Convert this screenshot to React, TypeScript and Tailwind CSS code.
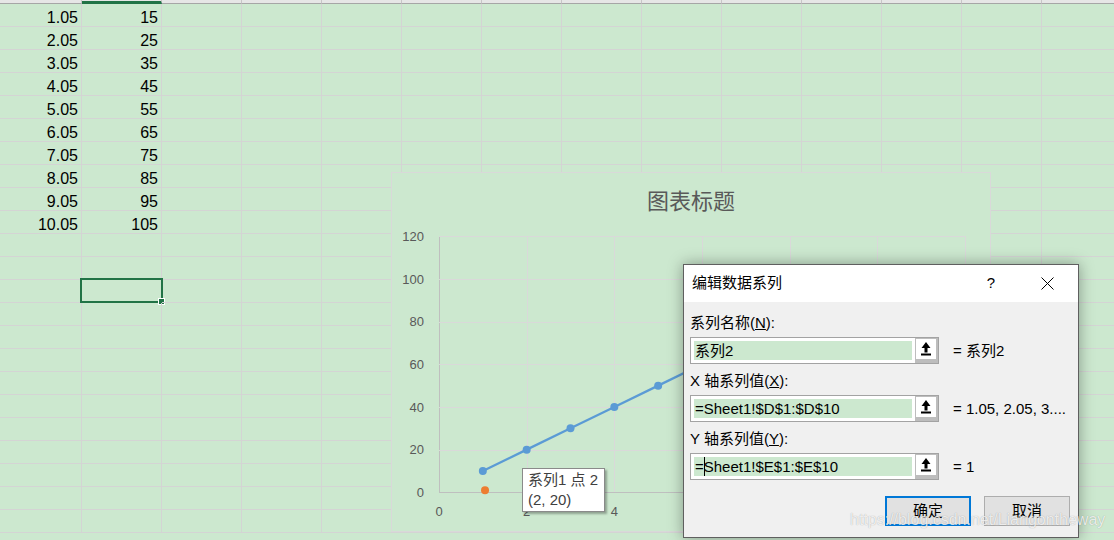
import React from 'react';

const COLS = Array.from({ length: 14 }, (_, i) => i);
const ROWS = Array.from({ length: 23 }, (_, i) => i);
const COL_A = ['1.05', '2.05', '3.05', '4.05', '5.05', '6.05', '7.05', '8.05', '9.05', '10.05'];
const COL_B = ['15', '25', '35', '45', '55', '65', '75', '85', '95', '105'];

// chart geometry (px, relative to chart box)
const PLOT_L = 48;
const PLOT_B = 320.3;
const X_UNIT = 87.67 / 2;
const Y_UNIT = 42.667 / 20;
const px = (x: number) => PLOT_L + x * X_UNIT;
const py = (y: number) => PLOT_B - y * Y_UNIT;

const UpIcon = () => (
    <svg width="10" height="14" viewBox="0 0 10 14">
        <polygon points="5,0 0.5,6 3.5,6 3.5,10.5 6.5,10.5 6.5,6 9.5,6" fill="#000" />
        <rect x="0" y="11.5" width="10" height="2" fill="#000" />
    </svg>
);

const Field: React.FC<{ children: React.ReactNode; result: string }> = ({ children, result }) => (
    <div className="flex items-center mt-[4px]">
        <div className="w-[249px] h-[27px] border border-[#a3a3a3] bg-white flex shrink-0">
            <div className="flex-1 p-[3px]">
                <div className="h-full bg-[#cce8cf] leading-[19px] pl-[1px] whitespace-nowrap">{children}</div>
            </div>
            <div className="w-[23px] h-full bg-[#bdbdbd] pt-[1px] pl-[1px]">
                <div className="w-[20px] h-[20px] bg-white flex items-center justify-center">
                    <UpIcon />
                </div>
            </div>
        </div>
        <span className="ml-[14px] whitespace-nowrap leading-[20px]">{result}</span>
    </div>
);

const Chart = () => {
    const vLines = [0, 2, 4, 6, 8, 10, 12];
    const hLines = [0, 20, 40, 60, 80, 100, 120];
    const pts = Array.from({ length: 10 }, (_, i) => [px(i + 1), py((i + 1) * 10)]);
    return (
        <div className="absolute left-[391px] top-[172px] w-[600px] h-[360px] border border-[#d9d9d9] bg-[#cce8cf]">
            <svg className="absolute left-[-1px] top-[-1px]" width="600" height="360" viewBox="0 0 600 360">
                {vLines.map((v) => (
                    <line key={'v' + v} x1={Math.round(px(v)) + 0.5} x2={Math.round(px(v)) + 0.5} y1={64} y2={320.5} stroke={v === 0 ? '#bfbfbf' : '#d9d9d9'} strokeWidth="1" />
                ))}
                {hLines.map((h) => (
                    <line key={'h' + h} x1={48} x2={575} y1={Math.round(py(h)) + 0.5} y2={Math.round(py(h)) + 0.5} stroke={h === 0 ? '#bfbfbf' : '#d9d9d9'} strokeWidth="1" />
                ))}
                {hLines.map((h) => (
                    <text key={'yl' + h} x={33} y={py(h) + 4.6} textAnchor="end" fontSize="13" fill="#595959" fontFamily="Liberation Sans, sans-serif">{h}</text>
                ))}
                {vLines.map((v) => (
                    <text key={'xl' + v} x={px(v)} y={343.7} textAnchor="middle" fontSize="13" fill="#595959" fontFamily="Liberation Sans, sans-serif">{v}</text>
                ))}
                <polyline points={pts.map((p) => p.join(',')).join(' ')} fill="none" stroke="#5b9bd5" strokeWidth="2.25" />
                {pts.map((p, i) => (
                    <circle key={i} cx={p[0]} cy={p[1]} r="4" fill="#5b9bd5" />
                ))}
                <circle cx={px(1.05)} cy={py(1)} r="4" fill="#ed7d31" />
            </svg>
            <div className="relative pt-[12px] text-center text-[22px] leading-[28px] text-[#595959] font-['Noto_Sans_CJK_SC',sans-serif]">
                图表标题
            </div>
        </div>
    );
};

export default function App() {
    return (
        <div className="relative w-[1114px] h-[540px] overflow-hidden bg-[#cce8cf] font-['Liberation_Sans','Noto_Sans_CJK_SC',sans-serif]">
            {/* column header edge */}
            <div className="flex h-[4px] bg-[#e6e6e6]">
                <div className="w-[2px] shrink-0 border-b border-[#a6a6a6]" />
                {COLS.map((c) => (
                    <div
                        key={c}
                        className={`w-[80px] shrink-0 border-r border-r-[#c6c6c6] ${c === 1 ? 'border-b-[3px] border-b-[#217346]' : 'border-b border-b-[#a6a6a6]'}`}
                    />
                ))}
            </div>

            {/* cells */}
            {ROWS.map((r) => (
                <div key={r} className="flex h-[23px]">
                    <div className="w-[2px] shrink-0 border-b border-[#d4d4d4]" />
                    {COLS.map((c) => (
                        <div
                            key={c}
                            className="relative w-[80px] shrink-0 h-full border-r border-b border-[#d4d4d4] flex items-end justify-end pr-[3px] text-[16px] leading-[16px] text-black"
                        >
                            {c === 0 && COL_A[r]}
                            {c === 1 && COL_B[r]}
                            {r === 12 && c === 1 && (
                                <div className="absolute left-[-2px] top-[-2px] w-[83px] h-[25px] border-2 border-[#217346]">
                                    <div className="absolute left-[76px] top-[18px] w-[7px] h-[7px] bg-[#217346] border border-white" />
                                </div>
                            )}
                        </div>
                    ))}
                </div>
            ))}

            <Chart />

            {/* data point tooltip */}
            <div className="absolute left-[522px] top-[468px] w-[83px] h-[44px] bg-white border border-[#8a8a8a] shadow-[2px_2px_2px_rgba(0,0,0,0.3)] pl-[5px] pt-[1px] text-[15px] leading-[20px] text-[#404040] whitespace-nowrap">
                <div>系列1 点 2</div>
                <div>(2, 20)</div>
            </div>

            {/* edit series dialog */}
            <div className="absolute left-[683px] top-[264px] w-[396px] h-[274px] border border-[#5f5f5f] bg-[#f0f0f0] shadow-[0_0_14px_rgba(0,0,0,0.35)] flex flex-col text-[15px] text-black">
                <div className="h-[37px] shrink-0 bg-white flex items-center pl-[8px]">
                    <span className="flex-1">编辑数据系列</span>
                    <span className="w-[30px] text-center mr-[18px]">?</span>
                    <span className="w-[46px] flex justify-center mr-[8px]">
                        <svg width="13" height="13" viewBox="0 0 13 13">
                            <path d="M0.5 0.5 L12.5 12.5 M12.5 0.5 L0.5 12.5" stroke="#000" strokeWidth="1" />
                        </svg>
                    </span>
                </div>
                <div className="flex flex-col pl-[6px] pr-[8px] pt-[11px]">
                    <div className="leading-[20px]">
                        系列名称(<span className="underline">N</span>):
                    </div>
                    <Field result="= 系列2">系列2</Field>
                    <div className="leading-[20px] mt-[7px]">
                        X 轴系列值(<span className="underline">X</span>):
                    </div>
                    <Field result="= 1.05, 2.05, 3....">=Sheet1!$D$1:$D$10</Field>
                    <div className="leading-[20px] mt-[7px]">
                        Y 轴系列值(<span className="underline">Y</span>):
                    </div>
                    <Field result="= 1">
                        =<span className="inline-block w-px h-[19px] bg-black align-[-4px] -mr-px" />Sheet1!$E$1:$E$10
                    </Field>
                    <div className="flex justify-end gap-[13px] mt-[16px]">
                        <button type="button" className="w-[86px] h-[30px] bg-[#e1e1e1] border-2 border-[#0078d7] flex items-center justify-center">
                            确定
                        </button>
                        <button type="button" className="w-[86px] h-[30px] bg-[#e1e1e1] border border-[#adadad] flex items-center justify-center">
                            取消
                        </button>
                    </div>
                </div>
            </div>

            {/* watermark */}
            <div className="absolute left-[850px] top-[510px] text-[16px] leading-[20px] text-white/80 [text-shadow:0_0_1px_rgba(0,0,0,0.35)] whitespace-nowrap font-['Liberation_Sans',sans-serif]">
                https://blog.csdn.net/Liangontheway
            </div>
        </div>
    );
}
